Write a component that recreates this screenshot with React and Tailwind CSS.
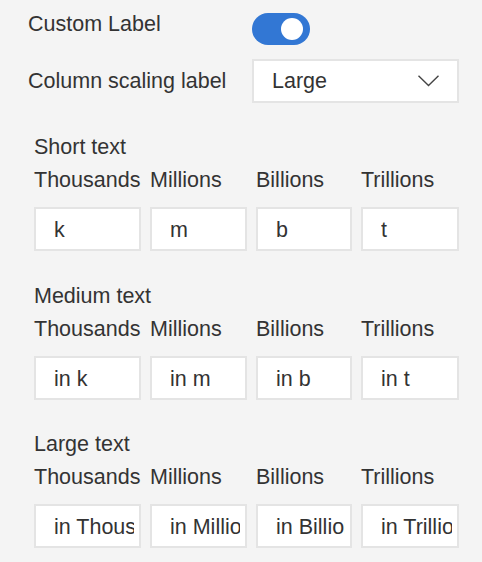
import React from "react";

const font = { fontFamily: '"Liberation Sans", Arial, sans-serif' };

function Section({ title, values, className }) {
  const labels = ["Thousands", "Millions", "Billions", "Trillions"];
  return (
    <div className={"pl-[34px] " + className}>
      <div className="h-[33px] leading-[33px]">{title}</div>
      <div className="grid grid-cols-[107px_97px_96px_98px] gap-x-[9px]">
        {labels.map((l) => (
          <div key={l} className="h-[33px] leading-[33px] whitespace-nowrap">
            {l}
          </div>
        ))}
        {values.map((v, i) => (
          <input
            key={i}
            readOnly
            value={v}
            className="mt-[10px] h-[44px] w-full min-w-0 bg-white border-2 border-[#e4e4e4] pl-[18px] pr-[5px] pt-[2px] text-[21.5px] text-[#333] outline-none"
            style={font}
          />
        ))}
      </div>
    </div>
  );
}

export default function App() {
  return (
    <div
      className="w-[482px] h-[562px] bg-[#f4f4f4] text-[#333] text-[21.5px] overflow-hidden pt-[8px]"
      style={font}
    >
      <div className="flex items-start pl-[28px]">
        <div className="w-[224px] h-[32px] leading-[32px]">Custom Label</div>
        <div className="relative mt-[5px] w-[58px] h-[32px] rounded-full bg-[#3277d4]">
          <div className="absolute right-[7px] top-[5px] w-[22px] h-[22px] rounded-full bg-white" />
        </div>
      </div>
      <div className="flex items-center pl-[28px] mt-[14px]">
        <div className="w-[224px] whitespace-nowrap">Column scaling label</div>
        <div className="w-[207px] h-[44px] bg-white border-2 border-[#e4e4e4] flex items-center justify-between pl-[18px] pr-[18px]">
          <span>Large</span>
          <svg width="21" height="12" viewBox="0 0 21 12" fill="none">
            <polyline
              points="0.5,0.8 10.5,10.5 20.5,0.8"
              stroke="#444"
              strokeWidth="1.4"
              fill="none"
            />
          </svg>
        </div>
      </div>
      <Section className="mt-[28px]" title="Short text" values={["k", "m", "b", "t"]} />
      <Section className="mt-[29px]" title="Medium text" values={["in k", "in m", "in b", "in t"]} />
      <Section
        className="mt-[28px]"
        title="Large text"
        values={["in Thousands", "in Millions", "in Billions", "in Trillions"]}
      />
    </div>
  );
}
